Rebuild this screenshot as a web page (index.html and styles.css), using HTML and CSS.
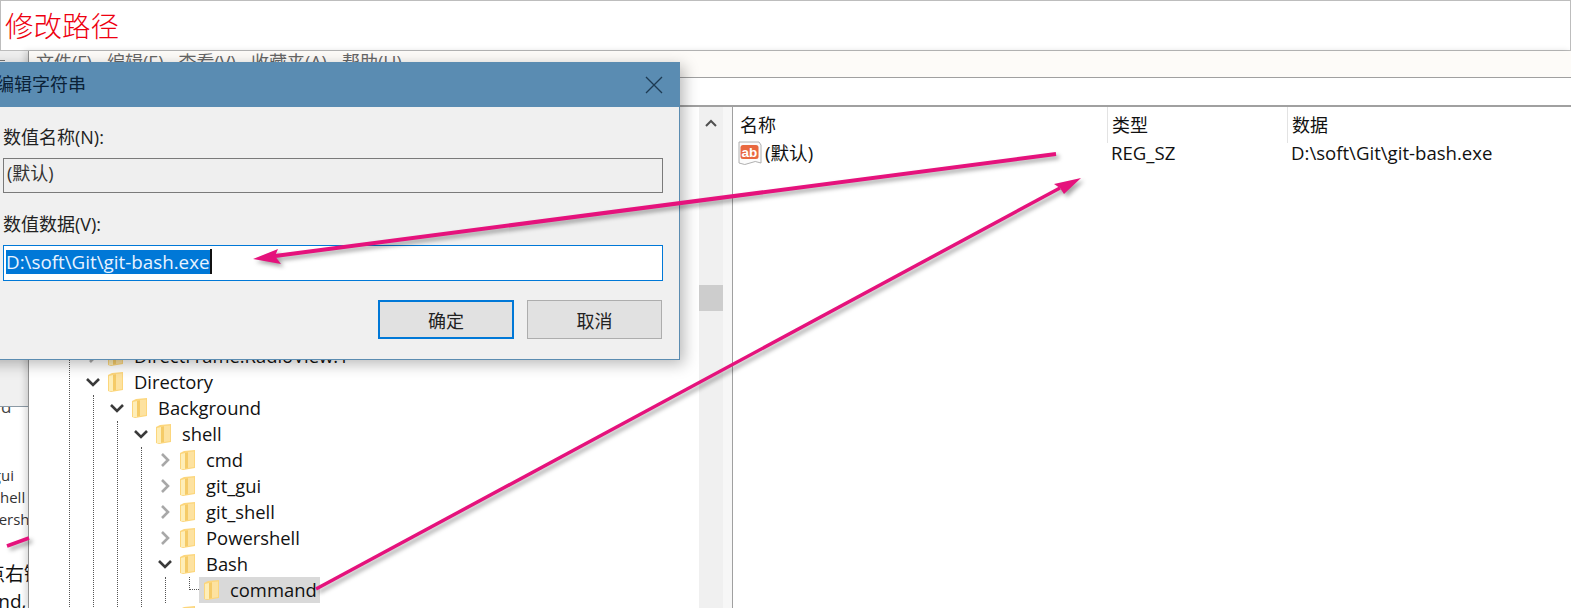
FILE: index.html
```html
<!DOCTYPE html>
<html lang="zh-CN">
<head>
<meta charset="utf-8">
<title>修改路径</title>
<link rel="stylesheet" href="styles.css">
</head>
<body>
<svg width="0" height="0" class="defs">
  <defs>
    <symbol id="folder" viewBox="0 0 15 21">
      <path d="M0 3 L4 1 L15 0 L15 18 L3 20 L0 19 Z" fill="#fcd67c"/>
      <path d="M1 4 L5 3 L5 19 L1 19 Z" fill="#feeeb8"/>
      <path d="M5 3 L8 2.5 L8 18 L5 18.5 Z" fill="#f5cb68"/>
      <path d="M8 2 L14 1.5 L14 17 L8 18 Z" fill="#fde2a0"/>
    </symbol>
    <symbol id="chev-down" viewBox="0 0 16 10">
      <path d="M2 2 L8 8 L14 2" fill="none" stroke="#3a3a3a" stroke-width="2.600"/>
    </symbol>
    <symbol id="chev-right" viewBox="0 0 10 16">
      <path d="M2 2 L8 8 L2 14" fill="none" stroke="#a8a8a8" stroke-width="2.600"/>
    </symbol>
  </defs>
</svg>

<div class="page">
  <header class="banner">修改路径</header>
  <div class="desk">
    <aside class="sliver">
      <div class="sliver-top"><span class="dash"></span></div>
      <div class="sliver-cut">d</div>
      <ul class="sliver-list">
        <li>git_gui</li>
        <li>git_shell</li>
        <li>Powershell</li>
      </ul>
      <p class="sliver-cn">点右键</p>
      <p class="sliver-en">command,</p>
    </aside>

    <main class="regedit">
      <nav class="menu">
        <span>文件(F)</span><span>编辑(E)</span><span>查看(V)</span><span>收藏夹(A)</span><span>帮助(H)</span>
      </nav>
      <div class="address"></div>
      <div class="panes">
        <section class="tree">
          <div class="group root">
            <div class="behind"></div>
            <div class="row">
              <span class="slot"><svg class="ic-r"><use href="#chev-right"/></svg></span>
              <svg class="folder"><use href="#folder"/></svg>
              <span class="label">DirectFrame.RadioView.1</span>
            </div>
            <div class="row">
              <span class="slot"><svg class="ic-d"><use href="#chev-down"/></svg></span>
              <svg class="folder"><use href="#folder"/></svg>
              <span class="label">Directory</span>
            </div>
            <div class="group">
              <div class="row">
                <span class="slot"><svg class="ic-d"><use href="#chev-down"/></svg></span>
                <svg class="folder"><use href="#folder"/></svg>
                <span class="label">Background</span>
              </div>
              <div class="group">
                <div class="row">
                  <span class="slot"><svg class="ic-d"><use href="#chev-down"/></svg></span>
                  <svg class="folder"><use href="#folder"/></svg>
                  <span class="label">shell</span>
                </div>
                <div class="group">
                  <div class="row">
                    <span class="slot"><svg class="ic-r"><use href="#chev-right"/></svg></span>
                    <svg class="folder"><use href="#folder"/></svg>
                    <span class="label">cmd</span>
                  </div>
                  <div class="row">
                    <span class="slot"><svg class="ic-r"><use href="#chev-right"/></svg></span>
                    <svg class="folder"><use href="#folder"/></svg>
                    <span class="label">git_gui</span>
                  </div>
                  <div class="row">
                    <span class="slot"><svg class="ic-r"><use href="#chev-right"/></svg></span>
                    <svg class="folder"><use href="#folder"/></svg>
                    <span class="label">git_shell</span>
                  </div>
                  <div class="row">
                    <span class="slot"><svg class="ic-r"><use href="#chev-right"/></svg></span>
                    <svg class="folder"><use href="#folder"/></svg>
                    <span class="label">Powershell</span>
                  </div>
                  <div class="row">
                    <span class="slot"><svg class="ic-d"><use href="#chev-down"/></svg></span>
                    <svg class="folder"><use href="#folder"/></svg>
                    <span class="label">Bash</span>
                  </div>
                  <div class="group">
                    <div class="row">
                      <span class="elbow"></span>
                      <span class="selected">
                        <svg class="folder"><use href="#folder"/></svg>
                        <span class="label">command</span>
                      </span>
                    </div>
                  </div>
                  <div class="row">
                    <span class="slot"></span>
                    <svg class="folder"><use href="#folder"/></svg>
                  </div>
                </div>
              </div>
            </div>
          </div>
        </section>
        <div class="scroll">
          <svg class="scroll-up" viewBox="0 0 12 8"><path d="M1 7 L6 2 L11 7" fill="none" stroke="#505050" stroke-width="2"/></svg>
          <div class="thumb"></div>
        </div>
        <div class="split"></div>
        <section class="values">
          <div class="vrow vhead">
            <span>名称</span><span class="sep">类型</span><span class="sep">数据</span>
          </div>
          <div class="vrow">
            <span class="vname">
              <svg class="ab" viewBox="0 0 24 24">
                <path d="M1 1 H21 L23 4 V22 Q17 19 12 22 Q7 25 1 22 Z" fill="#fbfbfb" stroke="#b0b0b0"/>
                <rect x="2.500" y="4" width="18" height="14" rx="2.500" fill="#e9683f"/>
                <text x="11.500" y="15.500" class="ab-text">ab</text>
              </svg>(默认)
            </span>
            <span class="vtype">REG_SZ</span>
            <span class="vtype">D:\soft\Git\git-bash.exe</span>
          </div>
        </section>
      </div>
    </main>
  </div>

  <section class="dialog">
    <div class="dialog-title">
      <span class="dialog-name">编辑字符串</span>
      <svg class="close" viewBox="0 0 18 18"><path d="M1 1 L17 17 M17 1 L1 17" stroke="#1d3a52" stroke-width="1.300" fill="none"/></svg>
    </div>
    <div class="dialog-body">
      <div class="field-label">数值名称(N):</div>
      <div class="field readonly">(默认)</div>
      <div class="field-label second">数值数据(V):</div>
      <div class="field active"><span class="selection">D:\soft\Git\git-bash.exe</span><span class="caret"></span></div>
      <div class="buttons">
        <button class="btn primary" type="button">确定</button>
        <button class="btn" type="button">取消</button>
      </div>
    </div>
  </section>

  <svg class="arrows" viewBox="0 0 1571 608">
    <path d="M7 546 L29 538" class="shaft"/>
    <path d="M1056 154 L275 256" class="shaft thick"/>
    <path d="M253 259 L278 249 L275 256 L281 264 Z" class="head"/>
    <path d="M316 589 L1060 188" class="shaft"/>
    <path d="M1081 178 L1054 184 L1060 188 L1064 194 Z" class="head"/>
  </svg>
</div>
</body>
</html>
```
FILE: styles.css
```css
* { box-sizing: border-box; }
html, body { margin: 0; padding: 0; }
body {
  width: 1571px;
  height: 608px;
  overflow: hidden;
  background: #fff;
  color: #111;
  font-family: "Open Sans", "Noto Sans CJK SC", sans-serif;
  font-size: 18px;
}
.defs { position: absolute; }
.page {
  position: relative;
  width: 1571px;
  height: 608px;
  overflow: hidden;
  display: flex;
  flex-direction: column;
}

.banner {
  height: 51px;
  flex: none;
  border: 1px solid #bdbdbd;
  padding-left: 4px;
  color: #ee0010;
  font-family: "Noto Sans CJK SC", sans-serif;
  font-weight: 300;
  font-size: 28.500px;
  line-height: 47px;
}

.desk { flex: 1; display: flex; min-height: 0; }

.sliver {
  width: 28px;
  flex: none;
  overflow: hidden;
  background: #fff;
  white-space: nowrap;
}
.sliver-top {
  height: 356px;
  background: #f0f0f0;
  border-bottom: 1px solid #8c9aa5;
  padding-top: 9px;
}
.dash { display: block; width: 5px; height: 1px; background: #777; }
.sliver-cut {
  height: 7px;
  line-height: 0;
  font-size: 17px;
  color: #444;
  overflow: hidden;
  padding-left: 1px;
}
.sliver-list {
  list-style: none;
  margin: 50px 0 0 -31px;
  padding: 0;
  font-size: 15px;
  line-height: 22px;
  color: #333;
}
.sliver-cn {
  margin: 31px 0 0 -14px;
  font-size: 19px;
  line-height: 26px;
}
.sliver-en {
  margin: 1px 0 0 -68px;
  font-size: 19px;
  line-height: 26px;
}

.regedit {
  flex: 1;
  min-width: 0;
  display: flex;
  flex-direction: column;
  border-left: 1px solid #8f8f8f;
  box-shadow: -3px 0 6px rgba(0, 0, 0, .14);
  z-index: 0;
}
.menu {
  height: 26px;
  flex: none;
  display: flex;
  gap: 15px;
  padding-left: 7px;
  background: #fdfbf8;
  color: #666;
  font-size: 18px;
  line-height: 22px;
}
.address {
  height: 30px;
  flex: none;
  background: #fff;
  border-top: 1px solid #a0a0a0;
  border-bottom: 2px solid #a0a0a0;
}
.panes { flex: 1; display: flex; min-height: 0; }

.tree {
  width: 670px;
  flex: none;
  overflow: hidden;
  padding: 2px 0 0 40px;
  background: #fff;
  font-size: 18.400px;
}
.group {
  margin-left: 12px;
  border-left: 1px dotted #555;
  padding-left: 11px;
}
.root { margin-left: 0; }
.behind { height: 234px; }
.row {
  height: 26px;
  display: flex;
  align-items: center;
  white-space: nowrap;
  color: #111;
}
.slot {
  width: 24px;
  flex: none;
  display: flex;
  justify-content: center;
  align-items: center;
}
.ic-d { width: 16px; height: 10px; }
.ic-r { width: 10px; height: 16px; }
.folder {
  width: 15px;
  height: 21px;
  flex: none;
  margin-left: 3px;
}
.label { margin-left: 11px; line-height: 26px; }
.elbow {
  width: 10px;
  height: 13px;
  margin-left: 12px;
  align-self: flex-start;
  border-left: 1px dotted #555;
  border-bottom: 1px dotted #555;
}
.selected {
  height: 26px;
  width: 121px;
  display: flex;
  align-items: center;
  background: #d9d9d9;
  padding-left: 2px;
}

.scroll {
  width: 24px;
  flex: none;
  background: #f0f0f0;
  display: flex;
  flex-direction: column;
  align-items: center;
}
.scroll-up { width: 12px; height: 8px; margin-top: 12px; flex: none; }
.thumb {
  width: 24px;
  height: 26px;
  margin-top: 158px;
  background: #cdcdcd;
}
.split {
  width: 10px;
  flex: none;
  background: #f7f7f7;
  border-right: 1px solid #a0a0a0;
}

.values { flex: 1; min-width: 0; background: #fff; font-size: 18.600px; }
.vrow {
  display: grid;
  grid-template-columns: 374px 180px 1fr;
  height: 26px;
  line-height: 26px;
  color: #111;
  white-space: nowrap;
}
.vhead { height: 33px; line-height: 36px; font-size: 18px; }
.vhead > span { padding-left: 7px; }
.vhead > .sep { border-left: 1px solid #e3e3e3; padding-left: 4px; }
.vname { display: flex; align-items: center; padding-left: 5px; }
.vtype { padding-left: 4px; }
.ab { width: 24px; height: 24px; flex: none; margin-right: 3px; }
.ab-text {
  font-family: "Liberation Sans", sans-serif;
  font-weight: 700;
  font-size: 13.500px;
  fill: #fff;
  text-anchor: middle;
}

.dialog {
  position: absolute;
  left: -20px;
  top: 62px;
  width: 700px;
  height: 298px;
  background: #f0f0f0;
  border: 1px solid #5b8cb1;
  box-shadow: 4px 4px 14px rgba(0, 0, 0, .28);
  display: flex;
  flex-direction: column;
}
.dialog-title {
  height: 44px;
  flex: none;
  background: #5a8cb2;
  color: #0b2238;
  display: flex;
  align-items: center;
  justify-content: space-between;
  padding: 0 16px 0 15px;
}
.dialog-name { margin-top: -4px; }
.close { width: 18px; height: 18px; }
.dialog-body {
  flex: 1;
  padding: 20px 16px 0 23px;
  color: #222;
}
.field-label { height: 22px; line-height: 20px; margin-left: -1px; }
.second { margin-top: 21px; }
.field {
  margin-top: 9px;
  border: 1px solid #7a7a7a;
  height: 35px;
  padding-left: 3px;
  display: flex;
  align-items: center;
  margin-left: -1px;
}
.readonly { background: #efefef; color: #333; padding-bottom: 7px; }
.active {
  height: 36px;
  background: #fff;
  border-color: #0078d7;
  padding-bottom: 6px;
  padding-top: 3px;
  padding-left: 2px;
  font-size: 18.800px;
}
.selection {
  background: #0078d7;
  color: #e8f3ff;
  height: 24px;
  line-height: 24px;
}
.caret { width: 2px; height: 25px; background: #111; }
.buttons {
  margin-top: 19px;
  display: flex;
  justify-content: flex-end;
  gap: 13px;
  padding-right: 1px;
}
.btn {
  width: 135px;
  height: 39px;
  background: #e1e1e1;
  border: 1px solid #adadad;
  font: inherit;
  color: #222;
  padding: 0;
}
.primary { width: 136px; border: 2px solid #0078d7; }

.arrows {
  position: absolute;
  left: 0;
  top: 0;
  width: 1571px;
  height: 608px;
  filter: drop-shadow(3px 3px 2px rgba(0, 0, 0, .35));
  pointer-events: none;
}
.shaft { fill: none; stroke: #e5127c; stroke-width: 3.500; }
.thick { stroke-width: 4; }
.head { fill: #e5127c; }
```
